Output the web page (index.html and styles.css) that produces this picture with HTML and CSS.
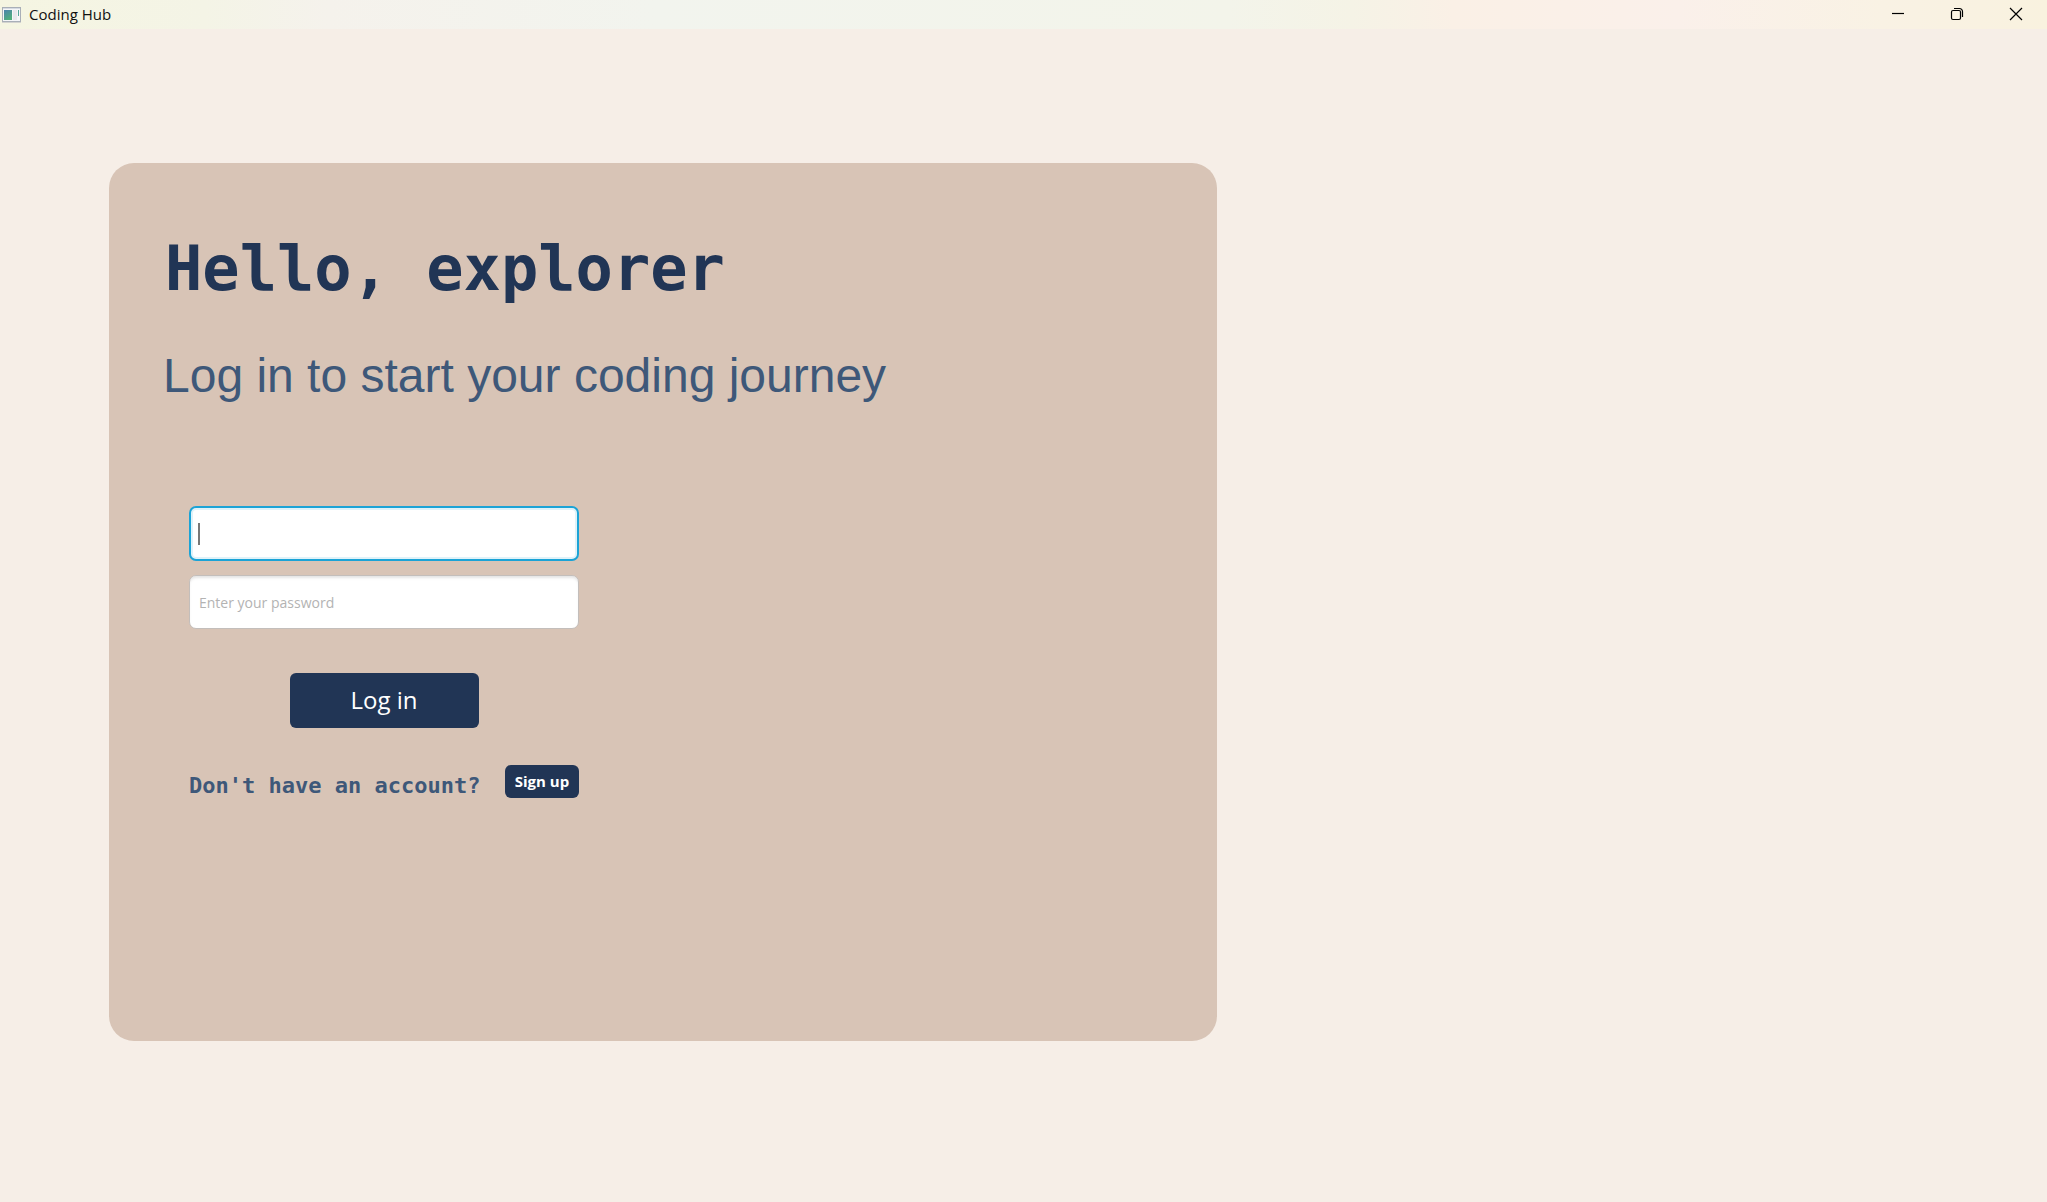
FILE: index.html
```
<!DOCTYPE html>
<html lang="en">
<head>
<meta charset="utf-8">
<meta name="viewport" content="width=device-width, initial-scale=1">
<title>Coding Hub</title>
<link rel="stylesheet" href="styles.css">
</head>
<body>
<header class="titlebar">
  <svg class="app-icon" width="20" height="16" viewBox="0 0 20 16" aria-hidden="true">
    <defs><linearGradient id="pane" x1="0" y1="0" x2="0.5" y2="1"><stop offset="0" stop-color="#4b83ad"/><stop offset="1" stop-color="#4fae7c"/></linearGradient></defs>
    <rect x="0.5" y="0.5" width="18" height="14" fill="#f5f6f8" stroke="#a9afb8"/>
    <path d="M0 15.5h19" stroke="#d3d3d0"/>
    <path d="M1 1.5h17" stroke="#d5dae2"/>
    <rect x="2" y="3" width="8" height="10" fill="url(#pane)"/>
    <rect x="11" y="3" width="4" height="10" fill="#e6e8ec"/>
    <rect x="16" y="3" width="1" height="6" fill="#58a79b"/>
  </svg>
  <span class="app-name">Coding Hub</span>
  <div class="window-controls">
    <button type="button" aria-label="Minimize"><svg width="14" height="14" viewBox="0 0 14 14"><path d="M1 6.5h12"/></svg></button>
    <button type="button" aria-label="Restore"><svg width="14" height="14" viewBox="0 0 14 14"><rect x="1.5" y="3.5" width="9" height="9" rx="1.5"/><path d="M4 1.5h5.5a3 3 0 0 1 3 3V10"/></svg></button>
    <button type="button" aria-label="Close"><svg width="14" height="14" viewBox="0 0 14 14"><path d="M1 1l12 12M13 1L1 13"/></svg></button>
  </div>
</header>
<main class="page">
  <section class="card">
    <h1 class="greeting">Hello, explorer</h1>
    <p class="tagline">Log in to start your coding journey</p>
    <form class="login">
      <input class="field field-active" type="text" aria-label="Username">
      <input class="field" type="password" placeholder="Enter your password" aria-label="Password">
      <button class="login-button" type="submit">Log in</button>
      <div class="signup">
        <p class="signup-text">Don't have an account?</p>
        <button class="signup-button" type="button">Sign up</button>
      </div>
    </form>
  </section>
</main>
</body>
</html>
```
FILE: styles.css
```
* {
  box-sizing: border-box;
}

body {
  margin: 0;
  min-height: 100vh;
  display: flex;
  flex-direction: column;
  background: #f6eee7;
  color: #213555;
  font-family: "Open Sans", "Noto Sans", sans-serif;
}

h1,
p {
  margin: 0;
}

button,
input {
  font-family: inherit;
}

.titlebar {
  display: flex;
  align-items: center;
  height: 29px;
  padding: 0 2px;
  background: linear-gradient(90deg, #f5f5e2 0%, #f4f4e6 10%, #f5f2ec 16%, #f2f4ee 32%, #f3f4ea 60%, #f5f3e6 66%, #faf0e6 71%, #faf0ea 82%, #f9f2e4 92%, #f9f2df 100%);
}

.app-name {
  margin-left: 7px;
  padding-bottom: 2px;
  color: #111;
  font-size: 15px;
  line-height: 20px;
}

.window-controls {
  display: flex;
  margin-left: auto;
}

.window-controls button {
  display: flex;
  align-items: center;
  justify-content: center;
  width: 59px;
  height: 29px;
  padding: 0 0 1px;
  border: 0;
  background: none;
}

.window-controls svg {
  fill: none;
  stroke: #000;
  stroke-width: 1.2;
}

.page {
  flex: 1;
  display: flex;
  padding: 134px 109px 161px;
}

.card {
  width: 100%;
  max-width: 1108px;
  padding: 64px 54px;
  border-radius: 25px;
  background: #d8c4b6;
}

.greeting {
  padding-left: 2px;
  font-family: "DejaVu Sans Mono", monospace;
  font-size: 62px;
  line-height: 84px;
  font-weight: 700;
}

.tagline {
  margin-top: 37px;
  color: #3e5879;
  font-family: "Liberation Sans", Arial, sans-serif;
  font-size: 48px;
  line-height: 56px;
}

.login {
  display: flex;
  flex-direction: column;
  width: 390px;
  margin: 102px 0 0 26px;
}

.field {
  width: 100%;
  height: 54px;
  padding: 0 9px;
  border: 1px solid #c3bebb;
  border-radius: 7px;
  outline: 0;
  background: #fff;
  box-shadow: inset 0 3px 3px -1px #e4e4e4;
  font-size: 14px;
}

.field + .field {
  margin-top: 14px;
}

.field::placeholder {
  color: #b3b3b3;
  opacity: 1;
}

.field-active {
  height: 55px;
  border: 2px solid #1ba3d6;
  background: linear-gradient(#777, #777) 7px center / 2px 22px no-repeat #fff;
  box-shadow: inset 0 0 0 2px #dff2f9;
}

.login-button {
  align-self: center;
  width: 189px;
  height: 55px;
  margin-top: 44px;
  padding: 0 0 2px;
  border: 0;
  border-radius: 6px;
  background: #213555;
  color: #fff;
  font-size: 24px;
}

.signup {
  display: flex;
  justify-content: space-between;
  align-items: flex-start;
  margin-top: 37px;
}

.signup-text {
  padding-top: 7px;
  color: #3e5879;
  font-family: "DejaVu Sans Mono", monospace;
  font-size: 22px;
  line-height: 28px;
  font-weight: 700;
}

.signup-button {
  width: 74px;
  height: 33px;
  padding: 0 0 2px;
  border: 0;
  border-radius: 6px;
  background: #213555;
  color: #fff;
  font-size: 15px;
  font-weight: 700;
}
```
